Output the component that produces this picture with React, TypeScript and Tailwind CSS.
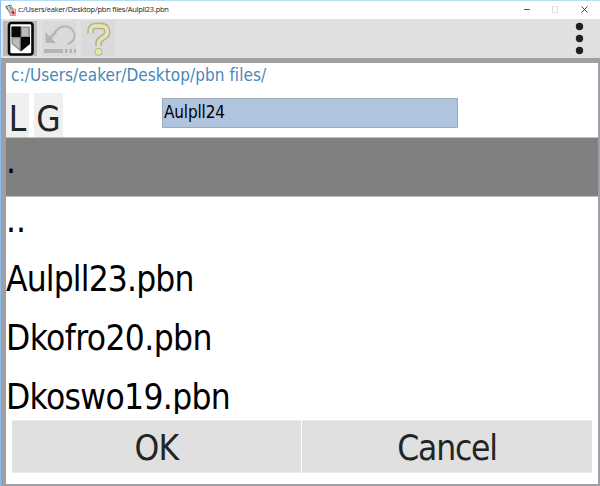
import type { ReactNode } from "react";

const files = [
  { name: ".", style: "" },
  { name: "..", style: "" },
  { name: "Aulpll23.pbn", style: "tracking-[-0.85px]" },
  { name: "Dkofro20.pbn", style: "tracking-[-0.6px]" },
  { name: "Dkoswo19.pbn", style: "tracking-[-0.65px]" },
];

function AppIcon() {
  return (
    <svg className="h-[13px] w-[12px] shrink-0" viewBox="0 0 12 13">
      <path d="M1 2.500 6 1l4 8-4 2Z" fill="#ddd" stroke="#777" strokeWidth=".8" />
      <path d="m1 2 2 4m1-5 3 6" stroke="#444" strokeWidth="1.3" strokeDasharray="1 1" />
      <path d="M5 5h5.500v6.500H5z" fill="#e8d5d5" stroke="#777" strokeWidth=".6" />
      <path d="m6 8 2-2 2 3-2 2Z" fill="#df2430" />
    </svg>
  );
}

function ShieldIcon() {
  return (
    <svg className="h-[36px] w-[34px]" viewBox="0 0 34 36">
      <rect x="6" y="2" width="23.500" height="31.500" rx="2.500" fill="#fff" stroke="#080808" strokeWidth="2.600" />
      <path d="M8.500 5.500h18.500v17.500L17.700 30.500 8.500 23Z" fill="#909090" />
      <path d="M8.500 5.500h9.200v10.500H8.500zM17.700 16H27v7l-9.300 7.500Z" fill="#080808" />
      <path d="M19 7h6.500v8H19z" fill="#bbb" />
      <path d="M10 17.500h6.500V28L10 22.500Z" fill="#bbb" />
    </svg>
  );
}

function UndoIcon() {
  return (
    <svg className="h-[36px] w-[34px]" viewBox="0 0 34 36" fill="none" stroke="#b4b4b4">
      <path d="M12.500 12C17 4 26 3.500 30.500 9c4 5 2 12-5 14" strokeWidth="1.900" />
      <path d="M14 11 6 19" strokeWidth="2.500" />
      <path d="M3.500 11v11H14Z" fill="#b4b4b4" stroke="none" />
      <path d="M2 30h19" strokeWidth="4" />
      <path d="M23 30h11" strokeWidth="4" strokeDasharray="2.500 2" />
    </svg>
  );
}

function HelpIcon() {
  const hook = "M9.500 12.500V9.500C9.500 6.500 12 5 15 5h6c3 0 5 2 5 4.500v2.500c0 2-1.500 3-3 4l-3.500 2.500c-1.500 1-2 2-2 3.500v3";
  return (
    <svg className="h-[36px] w-[34px]" viewBox="0 0 34 36" fill="none">
      <path d={hook} stroke="#acaca8" strokeWidth="6.400" />
      <circle cx="17.500" cy="30.800" r="3.900" fill="#b4b4b0" />
      <path d={hook} stroke="#e9e5a0" strokeWidth="3.700" />
      <circle cx="17.500" cy="30.800" r="2.900" fill="#eee89c" />
    </svg>
  );
}

function DialogButton({ children, layout }: { children: ReactNode; layout: string }) {
  return (
    <button
      className={`flex h-[53px] items-center justify-center border-y border-[#ebebeb] bg-[#e0e0e0] pt-[4px] text-[35px] leading-none text-[#222526] ${layout}`}
    >
      {children}
    </button>
  );
}

export default function App() {
  return (
    <div className="flex h-[486px] w-[600px] flex-col overflow-hidden border-l border-t border-l-[#8abced] border-t-[#b5dcf5] bg-[#a09fa4] [font-family:'DejaVu_Sans_Condensed','DejaVu_Sans',sans-serif] [font-stretch:condensed]">
      <header className="flex h-[18px] shrink-0 items-center bg-white">
        <div className="flex flex-1 items-center gap-px pl-[4px]">
          <AppIcon />
          <span className="text-[7.5px] leading-none tracking-[-0.24px] text-[#222] [font-family:'Open_Sans',sans-serif] [font-stretch:normal]">
            c:/Users/eaker/Desktop/pbn files/Aulpll23.pbn
          </span>
        </div>
        <svg className="h-[18px] w-[80px]" viewBox="0 0 80 18" fill="none">
          <path d="M4 8.500h6" stroke="#555" />
          <rect x="32.500" y="5.500" width="5" height="6" stroke="#ddd" />
          <path d="m61.500 5.500 6 6m0-6-6 6" stroke="#333" strokeWidth=".9" />
        </svg>
      </header>
      <div className="flex h-[39px] shrink-0 items-start gap-[5px] bg-[#e0e0e0] pl-[2px] pt-[2px]">
        <div className="h-[35px] w-[34px] bg-[#b9b9b9]"><ShieldIcon /></div>
        <div className="h-[35px] w-[34px] bg-[#dadada]"><UndoIcon /></div>
        <div className="h-[35px] w-[34px] bg-[#dadada]"><HelpIcon /></div>
        <svg className="ml-auto mr-[16px] h-[36px] w-[9px]" viewBox="0 0 9 36" fill="#202020">
          <circle cx="4.500" cy="5.500" r="3.700" />
          <circle cx="4.500" cy="17.500" r="3.700" />
          <circle cx="4.500" cy="29.500" r="3.700" />
        </svg>
      </div>
      <main className="ml-[5px] mr-[2px] mt-[5px] flex h-[421px] shrink-0 flex-col bg-white">
        <div className="h-[30px] shrink-0 pl-[5px] pt-[2px] text-[17px] leading-[20px] tracking-[0.06px] text-[#4787b8]">
          c:/Users/eaker/Desktop/pbn files/
        </div>
        <div className="flex h-[44px] shrink-0">
          <button className="w-[23px] bg-[#efefef] pt-[8px] text-[35px] leading-none text-[#222526]">L</button>
          <button className="ml-[5px] w-[29px] bg-[#efefef] pt-[8px] text-[35px] leading-none text-[#222526]">G</button>
          <div className="ml-[99px] mt-[5px] h-[30px] w-[296px] border border-[#a0abb9] bg-[#b0c4de] pl-px pt-[3px] text-[17px] leading-[20px] tracking-[-0.15px] text-black">
            Aulpll24
          </div>
        </div>
        <div className="h-[277px] shrink-0 overflow-hidden text-[35px] text-black">
          {files.map((file, index) => (
            <div
              key={file.name}
              className={`${index === 0 ? "h-[60px] border-y border-[#c0c0c0] bg-[#808080]" : "h-[59px]"} leading-[46px] ${file.style}`}
            >
              {file.name}
            </div>
          ))}
        </div>
        <div className="mx-[6px] mt-[6px] flex gap-px">
          <DialogButton layout="w-[289px] tracking-[-0.6px]">OK</DialogButton>
          <DialogButton layout="flex-1 tracking-[-1.2px]">Cancel</DialogButton>
        </div>
      </main>
    </div>
  );
}
